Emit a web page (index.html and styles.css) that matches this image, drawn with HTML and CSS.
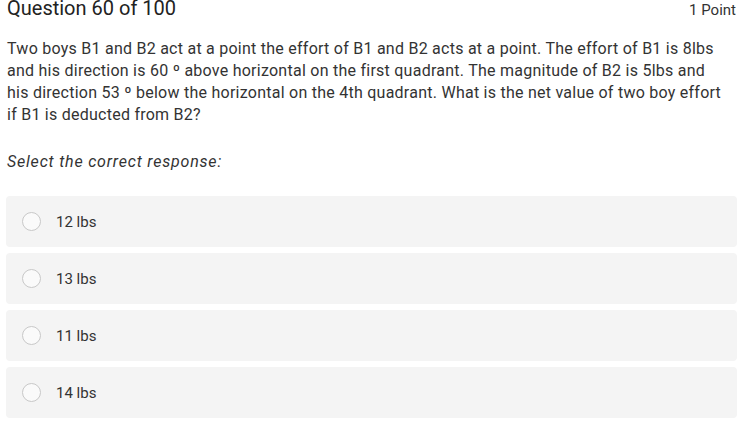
FILE: index.html
```html
<!DOCTYPE html>
<html>
<head>
<meta charset="utf-8">
<link rel="stylesheet" href="styles.css">
</head>
<body>
<div class="quiz">
  <div class="header">
    <h2 class="title">Question 60 of 100</h2>
    <span class="points">1 Point</span>
  </div>
  <p class="question">Two boys B1 and B2 act at a point the effort of B1 and B2 acts at a point. The effort of B1 is 8lbs<br>and his direction is 60 º above horizontal on the first quadrant. The magnitude of B2 is 5lbs and<br>his direction 53 º below the horizontal on the 4th quadrant. What is the net value of two boy effort<br>if B1 is deducted from B2?</p>
  <p class="prompt">Select the correct response:</p>
  <div class="options">
    <label class="option"><span class="radio"></span><span class="label">12 lbs</span></label>
    <label class="option"><span class="radio"></span><span class="label">13 lbs</span></label>
    <label class="option"><span class="radio"></span><span class="label">11 lbs</span></label>
    <label class="option"><span class="radio"></span><span class="label">14 lbs</span></label>
  </div>
</div>
</body>
</html>
```
FILE: styles.css
```css
html, body {
  margin: 0;
  padding: 0;
  background: #fff;
}
body {
  font-family: Roboto, "Liberation Sans", sans-serif;
  color: #333;
}
.quiz {
  padding: 0 2px 0 7px;
  margin-top: -4px;
}
.header {
  display: flex;
  justify-content: space-between;
  align-items: baseline;
  margin-right: 1px;
}
.title {
  margin: 0;
  font-size: 20px;
  font-weight: 400;
  line-height: 24px;
  color: #222;
}
.points {
  font-size: 15px;
  color: #333;
  margin-right: 1px;
}
.question {
  margin: 17.5px 0 0 0;
  font-size: 16px;
  line-height: 22.3px;
  letter-spacing: 0.25px;
  color: #333;
}
.prompt {
  margin: 24px 0 0 0;
  font-size: 16px;
  line-height: 22px;
  letter-spacing: 0.8px;
  font-style: italic;
  color: #333;
}
.options {
  display: flex;
  flex-direction: column;
  gap: 6px;
  margin: 23.5px 1px 0 -1px;
}
.option {
  display: flex;
  align-items: center;
  height: 51px;
  background: #f4f4f4;
  border-radius: 4px;
  padding-left: 16px;
}
.radio {
  width: 17px;
  height: 17px;
  border: 1px solid #c8c8c8;
  border-radius: 50%;
  background: #fafafa;
  flex: none;
}
.label {
  margin-left: 15px;
  font-size: 15px;
  color: #333;
}
```
